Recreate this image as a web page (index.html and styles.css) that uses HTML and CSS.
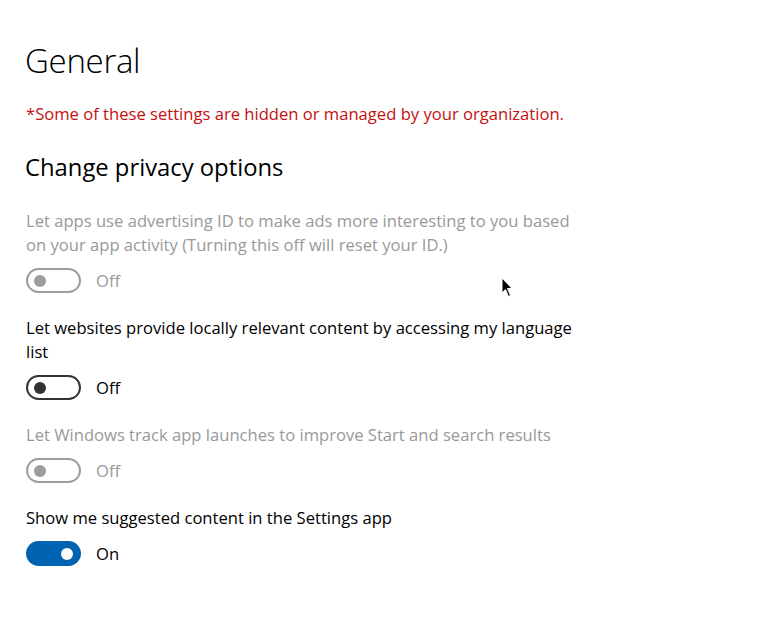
FILE: index.html
```html
<!DOCTYPE html>
<html lang="en">
<head>
<meta charset="utf-8">
<title>General</title>
<link rel="stylesheet" href="styles.css">
</head>
<body>
<main class="page">
  <h1 class="title">General</h1>
  <p class="notice">*Some of these settings are hidden or managed by your organization.</p>
  <h2 class="subtitle">Change privacy options</h2>

  <section class="setting disabled">
    <p class="desc">Let apps use advertising ID to make ads more interesting to you based on your app activity (Turning this off will reset your ID.)</p>
    <div class="toggle-row">
      <span class="toggle off"><span class="knob"></span></span>
      <span class="state">Off</span>
    </div>
  </section>

  <section class="setting">
    <p class="desc">Let websites provide locally relevant content by accessing my language list</p>
    <div class="toggle-row">
      <span class="toggle off"><span class="knob"></span></span>
      <span class="state">Off</span>
    </div>
  </section>

  <section class="setting disabled">
    <p class="desc">Let Windows track app launches to improve Start and search results</p>
    <div class="toggle-row">
      <span class="toggle off"><span class="knob"></span></span>
      <span class="state">Off</span>
    </div>
  </section>

  <section class="setting">
    <p class="desc">Show me suggested content in the Settings app</p>
    <div class="toggle-row">
      <span class="toggle on"><span class="knob"></span></span>
      <span class="state">On</span>
    </div>
  </section>
</main>
<svg class="cursor" width="14" height="22" viewBox="0 0 14 22" aria-hidden="true">
  <path d="M1 1 L1 16 L4.5 12.5 L7.5 19.5 L9.5 18.5 L6.5 11.5 L11 11.5 Z" fill="#000" stroke="#fff" stroke-width="1"/>
</svg>
</body>
</html>
```

FILE: styles.css
```css
html, body {
  margin: 0;
  padding: 0;
  background: #ffffff;
}

body {
  font-family: "Open Sans", "Noto Sans", "Liberation Sans", sans-serif;
  color: #000000;
  width: 764px;
  height: 634px;
  overflow: hidden;
  position: relative;
}

.page {
  padding: 38px 0 0 25px;
  width: 560px;
}

.title {
  margin: 0;
  font-size: 33px;
  font-weight: 300;
  line-height: 46px;
  letter-spacing: -0.3px;
}

.notice {
  margin: 18px 0 0 1px;
  font-size: 16.6px;
  line-height: 24px;
  color: #c50f0f;
  white-space: nowrap;
}

.subtitle {
  margin: 26px 0 0 0;
  font-size: 23.8px;
  font-weight: 400;
  line-height: 30px;
}

.setting {
  margin-top: 23px;
  padding-left: 1px;
}

.subtitle + .setting {
  margin-top: 27px;
}

.desc {
  margin: 0;
  font-size: 16.6px;
  line-height: 24px;
}

.toggle-row {
  display: flex;
  align-items: center;
  margin-top: 11px;
  height: 25px;
}

.toggle {
  box-sizing: border-box;
  width: 55px;
  height: 25px;
  border-radius: 13px;
  border: 2.5px solid #333333;
  display: flex;
  align-items: center;
  padding: 0 6px;
}

.knob {
  width: 12px;
  height: 12px;
  border-radius: 50%;
  background: #333333;
}

.toggle.on {
  background: #0063b1;
  border-color: #0063b1;
  justify-content: flex-end;
}

.toggle.on .knob {
  background: #ffffff;
}

.state {
  margin-left: 15px;
  font-size: 16.6px;
  line-height: 24px;
}

.disabled .desc,
.disabled .state {
  color: #999999;
}

.disabled .toggle {
  border-color: #9c9c9c;
}

.disabled .knob {
  background: #9c9c9c;
}

.cursor {
  position: absolute;
  left: 501px;
  top: 277px;
}
```
